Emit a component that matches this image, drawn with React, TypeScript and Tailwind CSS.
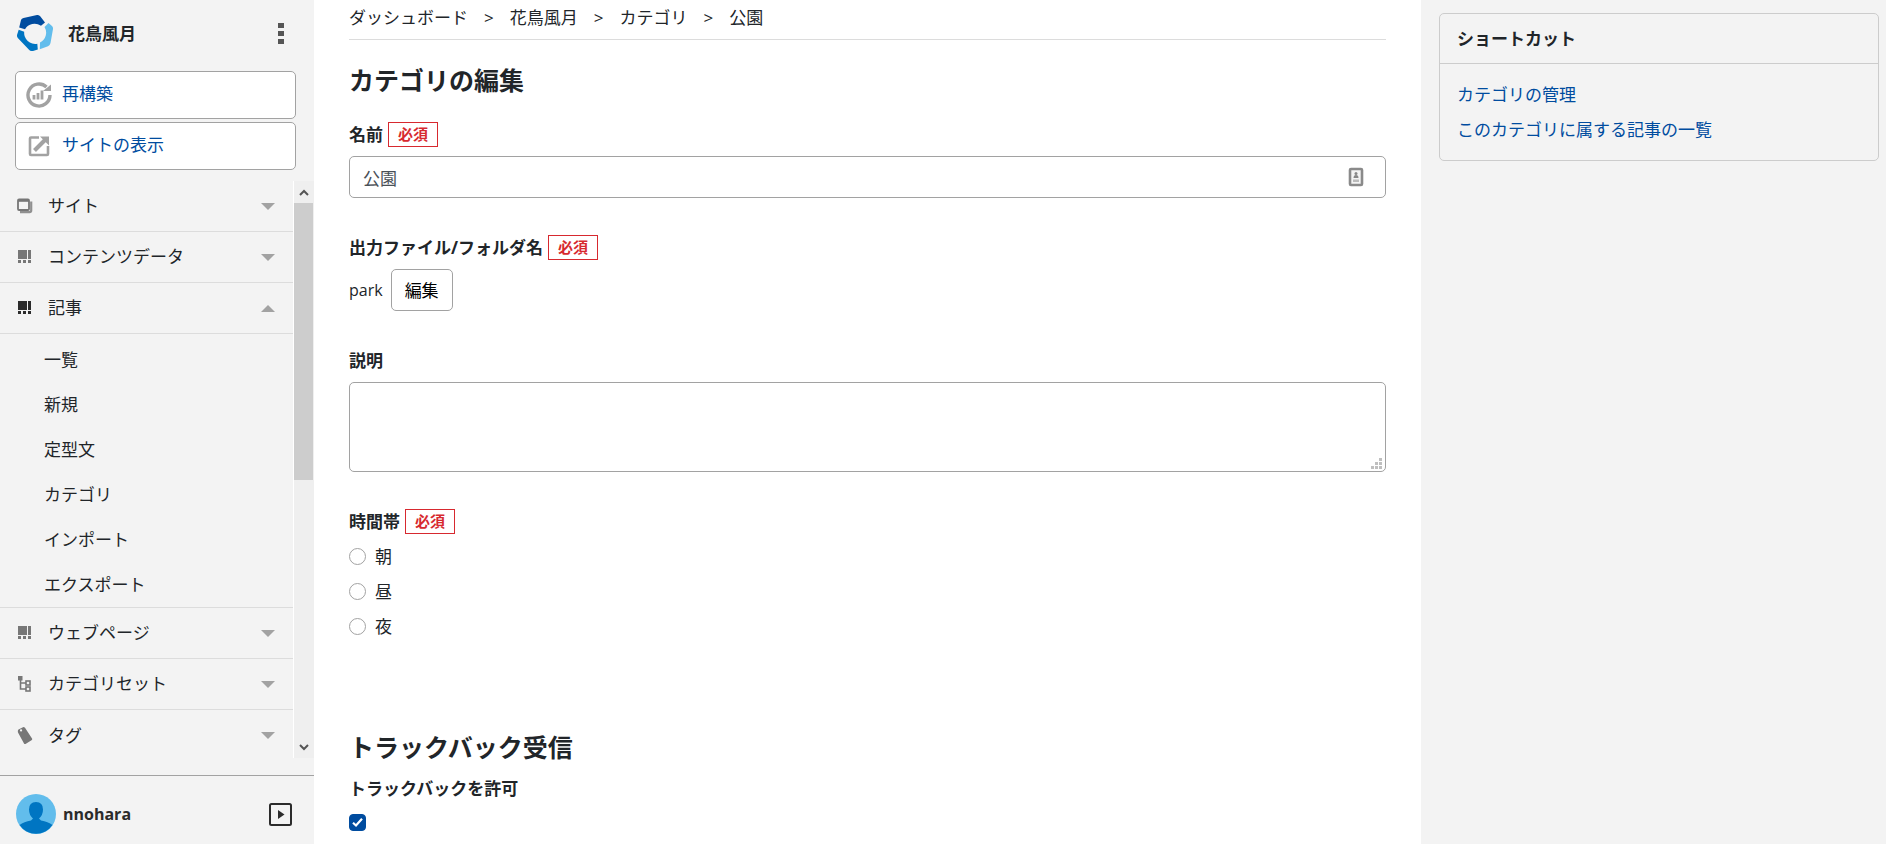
import { useState } from "react"

const navTop = [
  { id: "site", label: "サイト", icon: "site" },
  { id: "content", label: "コンテンツデータ", icon: "blocks" },
  {
    id: "entry",
    label: "記事",
    icon: "blocks",
    children: ["一覧", "新規", "定型文", "カテゴリ", "インポート", "エクスポート"],
  },
  { id: "page", label: "ウェブページ", icon: "blocks" },
  { id: "set", label: "カテゴリセット", icon: "tree" },
  { id: "tag", label: "タグ", icon: "tag" },
]

const crumbs = ["ダッシュボード", "花鳥風月", "カテゴリ"]
const times = ["朝", "昼", "夜"]

function Logo() {
  return (
    <svg className="w-9 h-9" viewBox="0 0 36 36">
      <path fill="#004c9f" d="M6.500 3 L20 0 Q22 -0.200 23.200 1.300 L28 7.500 L24 10.800 A11 11 0 0 0 8 14.200 L2.200 12.500 L4 5 Q4.600 3.400 6.500 3 Z" />
      <path fill="#62bdec" d="M27.500 12 L31.500 8 L35 11 Q36.200 12.200 36 14 L33.500 28 Q33 30.300 31 31.200 L22.800 34.200 L23 27.600 A11 11 0 0 0 27.500 12 Z" />
      <path fill="#0075c2" d="M1.700 14.800 L7.200 16.800 A11 11 0 0 0 20.300 28.700 L20.800 34.500 L16 35.900 Q13.500 36.400 12 34.700 L0.800 23 Q-0.300 21.600 0 20 Z" />
    </svg>
  )
}

function NavIcon({ name }: { name: string }) {
  if (name === "site") {
    return (
      <svg className="w-4 h-4" viewBox="0 0 16 16" fill="none" stroke="currentColor">
        <path d="M3 14.200 H12.500 Q14.200 14.200 14.200 12.500 V3.500" strokeWidth="2.200" opacity="0.8" />
        <rect x="1" y="1.500" width="11" height="10.500" rx="1" strokeWidth="1.800" />
        <path d="M1 2.800 H12" strokeWidth="2" />
      </svg>
    )
  }
  if (name === "tree") {
    return (
      <svg className="w-4 h-4" viewBox="0 0 16 16" fill="none" stroke="currentColor" strokeWidth="1.600">
        <rect x="1" y="0" width="4.500" height="4.500" fill="currentColor" stroke="none" />
        <path d="M3.500 4 V13 H9 M3.500 7 H9" />
        <rect x="9" y="5" width="4" height="4" />
        <rect x="9" y="11" width="4" height="4" />
      </svg>
    )
  }
  if (name === "tag") {
    return (
      <svg className="w-4 h-[18px]" viewBox="0 0 16 18" fill="currentColor">
        <path fillRule="evenodd" d="M1.500 2.500 L6 0.200 Q7 -0.200 8 0.800 L15 11.500 Q15.600 12.500 14.500 13.200 L8.500 17 Q7.500 17.400 7 16.500 L1 5.500 Q0.500 3.500 1.500 2.500 Z M4 2.300 A1.100 1.100 0 1 0 4.100 4.500 A1.100 1.100 0 1 0 4 2.300 Z" />
      </svg>
    )
  }
  return (
    <svg className="w-4 h-4" viewBox="0 0 16 16" fill="currentColor">
      <path d="M1 1 H10 V10 H1 Z M11 1 H14 V10 H11 Z M1 11 H4 V14 H1 Z M6 11 H9 V14 H6 Z M11 11 H14 V14 H11 Z" />
    </svg>
  )
}

function RebuildIcon() {
  return (
    <svg className="w-[26px] h-[26px]" viewBox="0 0 26 26" fill="none" stroke="#a2a2a2">
      <path d="M20.500 5 A11 11 0 1 0 24 13" strokeWidth="3.400" />
      <path d="M17 9 H25 V2.500 Z" fill="#a2a2a2" stroke="none" />
      <path d="M8 13 V17.500 M12 11 V17.500 M16 8.500 V17.500" strokeWidth="2.800" />
    </svg>
  )
}

function ViewIcon() {
  return (
    <svg className="w-[26px] h-[26px]" viewBox="0 0 26 26" fill="none" stroke="#a2a2a2">
      <path d="M13 4.500 H5 Q4 4.500 4 5.500 V21 Q4 22 5 22 H21 Q22 22 22 21 V13" strokeWidth="2.600" />
      <path d="M8.500 17.500 L19 7" strokeWidth="4" />
      <path d="M14 3.500 H23 V12.500 Z" fill="#a2a2a2" stroke="none" />
    </svg>
  )
}

function Required() {
  return (
    <span className="border border-[#d7292f] px-[9px] text-[15px] leading-[23px] text-[#d7292f]">必須</span>
  )
}

export default function App() {
  const [open, setOpen] = useState("entry")
  const [name, setName] = useState("公園")
  const [time, setTime] = useState("")
  const [allow, setAllow] = useState(true)

  return (
    <div className="flex min-h-screen bg-white text-[#212529] text-[17px] leading-[25px] font-['Open_Sans','Noto_Sans_CJK_JP',sans-serif]">
      {/* サイドバー */}
      <div className="sticky top-0 flex h-screen w-[314px] shrink-0 flex-col bg-[#f3f3f3]">
        <div className="flex items-center pl-[17px] pr-[30px] pt-[15px] pb-5">
          <Logo />
          <span className="ml-[15px] flex-1 font-bold">花鳥風月</span>
          <button aria-label="メニュー" className="flex flex-col gap-[3px]">
            <span className="h-[5px] w-[6px] bg-[#555]" />
            <span className="h-[5px] w-[6px] bg-[#555]" />
            <span className="h-[5px] w-[6px] bg-[#555]" />
          </button>
        </div>

        <div className="flex flex-col gap-[3px] pl-[15px] pr-[18px]">
          <a href="#" className="flex h-12 items-center gap-[10px] rounded-[5px] border border-[#a2a2a2] bg-white px-[10px] text-[#004c9f]">
            <RebuildIcon />
            <span className="pb-[3px]">再構築</span>
          </a>
          <a href="#" className="flex h-12 items-center gap-[10px] rounded-[5px] border border-[#a2a2a2] bg-white px-[10px] text-[#004c9f]">
            <ViewIcon />
            <span className="pb-[3px]">サイトの表示</span>
          </a>
        </div>

        <div className="mt-[11px] mb-[17px] flex min-h-0 flex-1">
          <nav className="flex-1 overflow-hidden">
            {navTop.map((item, i) => (
              <div key={item.id}>
                <button
                  onClick={() => setOpen(open === item.id ? "" : item.id)}
                  className={`flex h-[51px] w-full items-center pl-[17px] pr-[18px] text-left ${i < navTop.length - 1 || open === item.id ? "border-b border-[#dcdcdc]" : ""}`}
                >
                  <span className={open === item.id ? "text-[#2b2b2b]" : "text-[#777]"}>
                    <NavIcon name={item.icon} />
                  </span>
                  <span className="ml-[15px] flex-1 pb-px">{item.label}</span>
                  <svg className="h-[7px] w-[14px]" viewBox="0 0 14 7" fill="#a2a2a2">
                    <path d={open === item.id ? "M0 7 L7 0 L14 7 Z" : "M0 0 L7 7 L14 0 Z"} />
                  </svg>
                </button>
                {item.children && open === item.id && (
                  <ul className="border-b border-[#dcdcdc] pt-[3px]">
                    {item.children.map(child => (
                      <li key={child}>
                        <a href="#" className="flex h-[45px] items-center pl-[44px]">{child}</a>
                      </li>
                    ))}
                  </ul>
                )}
              </div>
            ))}
          </nav>

          {/* スクロールバー */}
          <div className="flex w-[21px] flex-col border-l border-white bg-[#efefef]">
            <button aria-label="上へ" className="flex h-[22px] items-center justify-center">
              <svg className="h-[7px] w-[10px]" viewBox="0 0 10 7" fill="none" stroke="#555" strokeWidth="2">
                <path d="M1 6 L5 2 L9 6" />
              </svg>
            </button>
            <div className="mr-px flex-1">
              <div className="h-[52%] bg-[#cdcdcd]" />
            </div>
            <button aria-label="下へ" className="flex h-[22px] items-center justify-center">
              <svg className="h-[7px] w-[10px]" viewBox="0 0 10 7" fill="none" stroke="#555" strokeWidth="2">
                <path d="M1 1 L5 5 L9 1" />
              </svg>
            </button>
          </div>
        </div>

        <div className="flex h-[69px] shrink-0 items-center border-t border-[#a2a2a2] pl-4 pr-[22px] pt-2">
          <svg className="h-10 w-10" viewBox="0 0 40 40">
            <circle cx="20" cy="20" r="20" fill="#62bdec" />
            <path d="M3.500 31 Q8 27.500 15 26.500 L17 24.500 Q13 21 13 15.500 Q13 8 20 8 Q27 8 27 15.500 Q27 21 23 24.500 L25 26.500 Q32 27.500 36.500 31 A20 20 0 0 1 3.500 31 Z" fill="#0075c2" />
          </svg>
          <span className="ml-[7px] flex-1 text-base font-bold text-[#2b2b2b]">nnohara</span>
          <button aria-label="開く">
            <svg className="h-[23px] w-[23px]" viewBox="0 0 23 23" fill="none" stroke="#2b2b2b" strokeWidth="2">
              <rect x="1" y="1" width="21" height="21" rx="1.500" />
              <path d="M9 7 V16 L15.500 11.500 Z" fill="#2b2b2b" stroke="none" />
            </svg>
          </button>
        </div>
      </div>

      {/* 編集フォーム */}
      <main className="min-w-0 flex-1 px-[35px]">
        <div className="flex gap-4 border-b border-[#dcdcdc] pt-[5px] pb-[9px]">
          {crumbs.map(crumb => (
            <span key={crumb} className="flex gap-4">
              <a href="#">{crumb}</a>
              <span>&gt;</span>
            </span>
          ))}
          <span>公園</span>
        </div>

        <h1 className="mt-5 text-[25px] font-bold leading-10">カテゴリの編集</h1>

        <form className="mt-[22px] flex flex-col gap-[37px]">
          <div className="flex flex-col gap-[9px]">
            <label htmlFor="name" className="flex gap-[5px] font-bold">
              名前 <Required />
            </label>
            <div className="relative">
              <input
                id="name"
                value={name}
                onChange={e => setName(e.target.value)}
                className="h-[42px] w-full rounded-[5px] border border-[#a2a2a2] px-[13px] text-[#495057]"
              />
              <svg className="absolute right-[22px] top-[11px] h-5 w-4" viewBox="0 0 16 20" fill="#888">
                <rect x="2" y="2" width="12" height="16" rx="1" fill="#f4f4f4" stroke="#8a8a8a" strokeWidth="2.600" />
                <circle cx="8" cy="6.500" r="1.500" />
                <path d="M5.500 11 Q5.500 8 8 8 Q10.500 8 10.500 11 Z" />
                <path d="M5 12.500 H11 V15 H5 Z" fill="#bbb" />
              </svg>
            </div>
          </div>

          <div className="flex flex-col gap-[9px]">
            <div className="flex gap-[5px] font-bold">
              出力ファイル/フォルダ名 <Required />
            </div>
            <div className="flex items-center gap-2">
              <span className="text-base">park</span>
              <button type="button" className="h-[42px] rounded-[5px] border border-[#a2a2a2] px-[13px] text-black">編集</button>
            </div>
          </div>

          <div className="flex flex-col gap-[9px]">
            <label htmlFor="description" className="font-bold">説明</label>
            <div className="relative flex">
              <textarea id="description" className="h-[90px] w-full resize-none rounded-[5px] border border-[#a2a2a2] px-[13px] py-2" />
              <svg className="absolute bottom-[3px] right-1 h-[11px] w-[11px]" viewBox="0 0 11 11" fill="#bfbfbf">
                <path d="M8 0 H11 V3 H8 Z M4 4 H7 V7 H4 Z M8 4 H11 V7 H8 Z M0 8 H3 V11 H0 Z M4 8 H7 V11 H4 Z M8 8 H11 V11 H8 Z" />
              </svg>
            </div>
          </div>

          <fieldset className="flex flex-col gap-[10px]">
            <legend className="contents">
              <span className="flex gap-[5px] font-bold">
                時間帯 <Required />
              </span>
            </legend>
            {times.map(t => (
              <label key={t} className="flex items-center gap-[9px]">
                <input
                  type="radio"
                  name="time"
                  checked={time === t}
                  onChange={() => setTime(t)}
                  className="h-[17px] w-[17px] appearance-none rounded-full border border-[#a2a2a2] bg-white checked:border-[5px] checked:border-[#004c9f]"
                />
                {t}
              </label>
            ))}
          </fieldset>
        </form>

        <h2 className="mt-[88px] text-[25px] font-bold leading-10">トラックバック受信</h2>
        <div className="mt-[9px] flex flex-col gap-2">
          <label htmlFor="allow" className="font-bold">トラックバックを許可</label>
          <div className="relative flex h-[26px] items-center">
            <input
              id="allow"
              type="checkbox"
              checked={allow}
              onChange={() => setAllow(!allow)}
              className="h-[17px] w-[17px] appearance-none rounded-[4px] border border-[#a2a2a2] checked:border-[#004c9f] checked:bg-[#004c9f]"
            />
            {allow && (
              <svg className="pointer-events-none absolute left-[3px] h-[11px] w-[11px]" viewBox="0 0 11 11" fill="none" stroke="#fff" strokeWidth="2.200">
                <path d="M1 5.800 L4 8.500 L10 1.800" />
              </svg>
            )}
          </div>
        </div>
      </main>

      {/* ショートカット */}
      <aside className="w-[465px] shrink-0 bg-[#f3f3f3] pl-[18px] pr-[7px] pt-[13px]">
        <div className="rounded-[5px] border border-[#ccc]">
          <div className="border-b border-[#ccc] px-[17px] py-3 font-bold">ショートカット</div>
          <ul className="flex flex-col gap-[10px] px-[17px] py-[18px]">
            <li><a href="#" className="text-[#004c9f]">カテゴリの管理</a></li>
            <li><a href="#" className="text-[#004c9f]">このカテゴリに属する記事の一覧</a></li>
          </ul>
        </div>
      </aside>
    </div>
  )
}
